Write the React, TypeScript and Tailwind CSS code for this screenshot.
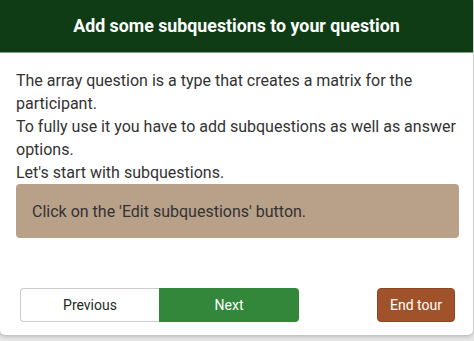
import React from "react";

export default function App() {
  return (
    <div className="w-[474px] h-[341px] bg-[#e6e6e6] font-['Roboto',sans-serif]">
      <div className="w-[473px] h-[335px] bg-white rounded-b-[5px] shadow-[0_1px_4px_rgba(0,0,0,0.25)] flex flex-col">
        <div className="h-[53px] bg-[#0f3c14] border-b border-[#7fa583] flex items-center justify-center">
          <h3 className="text-[17.8px] font-bold text-white leading-none">
            Add some subquestions to your question
          </h3>
        </div>
        <div className="px-4 pt-[16px] text-[16px] leading-[23px] text-[#333333]">
          <p>
            The array question is a type that creates a matrix for the participant.
            <br />
            To fully use it you have to add subquestions as well as answer options.
            <br />
            Let's start with subquestions.
          </p>
          <div className="w-[443px] rounded-[4px] bg-[#b9a089] px-4 py-[15.5px] text-[#333333]">
            Click on the 'Edit subquestions' button.
          </div>
        </div>
        <div className="mt-auto pb-[13px] pl-5 pr-[18px] flex items-center justify-between">
          <div className="flex">
            <button className="w-[139px] h-[34px] bg-white border border-[#cccccc] border-r-0 rounded-l-[4px] text-[14px] text-[#1d2b1d]">
              Previous
            </button>
            <button className="w-[140px] h-[34px] bg-[#33873b] rounded-r-[4px] text-[14px] text-white">
              Next
            </button>
          </div>
          <button className="w-[78px] h-[34px] bg-[#a0522a] border border-[#8d4522] rounded-[4px] text-[14px] text-white">
            End tour
          </button>
        </div>
      </div>
    </div>
  );
}
